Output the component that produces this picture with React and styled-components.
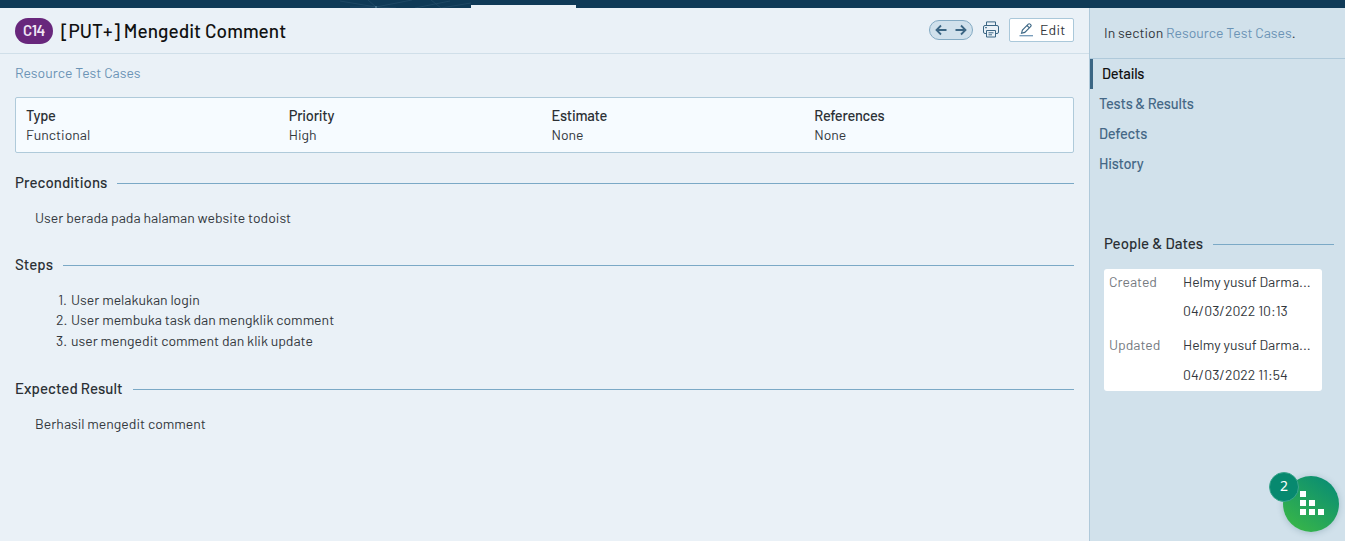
import React from "react";
import styled, { createGlobalStyle } from "styled-components";

const Global = createGlobalStyle`
  * { box-sizing: border-box; }
  html, body { margin: 0; height: 100%; overflow: hidden; }
  body {
    background: #eaf1f7;
    color: #33383d;
    font-family: Barlow, Roboto, "Liberation Sans", sans-serif;
    font-size: 14px;
    line-height: 20px;
  }
`;

const Txt = styled.span`
  letter-spacing: ${(p) => p.$ls || 0}px;
  white-space: nowrap;
`;
const Page = styled.div`
  height: 541px;
  display: flex;
  flex-direction: column;
`;
const TopBar = styled.div`
  height: 8px;
  flex: none;
  display: flex;
  align-items: flex-end;
  background: #0f3a57;
`;
const Pattern = styled.svg`
  width: 131px;
  height: 8px;
  margin-left: 340px;
`;
const ActiveTab = styled.div`
  width: 105px;
  height: 3px;
  background: #eaf1f7;
`;
const Body = styled.div`
  flex: 1;
  display: flex;
`;
const Main = styled.main`
  width: 1089px;
`;
const Header = styled.header`
  height: 46px;
  display: flex;
  align-items: center;
  padding: 0 15px;
  border-bottom: 1px solid #d0dfe9;
`;
const CaseId = styled.div`
  width: 38px;
  height: 26px;
  border-radius: 13px;
  background: #68277c;
  color: #f1e6f5;
  font-size: 15px;
  font-weight: 600;
  text-align: center;
  line-height: 25px;
`;
const Title = styled.h1`
  flex: 1;
  margin: 1px 0 0 8px;
  font-size: 19px;
  line-height: 26px;
  font-weight: 500;
  color: #111;
`;
const NavPill = styled.div`
  display: flex;
  align-items: center;
  justify-content: center;
  width: 44px;
  height: 20px;
  margin: -2px 10px 0 0;
  border: 1px solid #83aac3;
  border-radius: 10px;
  background: #d0e1ec;
`;
const PrintIcon = styled.svg`
  margin: -2px 10px 0 0;
`;
const EditButton = styled.button`
  display: flex;
  align-items: center;
  width: 65px;
  height: 24px;
  margin: -2px 0 0;
  padding: 0 0 0 9px;
  gap: 6px;
  border: 1px solid #aac8da;
  border-radius: 2px;
  background: #fff;
  color: #33383d;
  font: inherit;
`;
const Link = styled.a`
  color: #6b93b5;
`;
const Content = styled.div`
  padding: 9px 15px 0;
`;
const Fields = styled.div`
  display: grid;
  grid-template-columns: repeat(4, 262.75px);
  width: 1059px;
  height: 56px;
  margin-top: 14px;
  padding: 8px 0 0 10px;
  border: 1px solid #afcada;
  border-radius: 2px;
  background: #f6fbff;
  overflow: hidden;
`;
const Field = styled.div`
  display: flex;
  flex-direction: column;
  line-height: 19px;
`;
const Label = styled(Txt)`
  font-size: 14.6px;
  font-weight: 500;
  letter-spacing: -0.25px;
  color: #2b3035;
`;
const SectionHead = styled.h2`
  display: flex;
  align-items: center;
  gap: 10px;
  height: 20px;
  margin: ${(p) => p.$top}px 0 0;
  font-size: 15px;
  line-height: 18px;
  letter-spacing: 0.05px;
  font-weight: 500;
  color: #2b3035;
  & > span {
    letter-spacing: inherit;
    margin-top: -2px;
  }
  &::after {
    content: "";
    flex: 1;
    height: 1px;
    margin-top: 1px;
    background: #7ba9c6;
  }
`;
const Paragraph = styled.p`
  margin: 15px 0 0 20px;
`;
const Steps = styled.ol`
  margin: 15px 0 0 41px;
  padding: 0;
  list-style: none;
  line-height: 20.4px;
`;
const Step = styled.li`
  display: flex;
`;
const StepNo = styled.span`
  width: 11px;
  margin-right: 4px;
  text-align: right;
`;
const Side = styled.aside`
  width: 256px;
  border-left: 1px solid #afc9da;
  background: #d1e1eb;
`;
const SideIntro = styled.div`
  height: 51px;
  padding: 15px 0 0 14px;
  border-bottom: 1px solid #afc9da;
`;
const NavItem = styled.div`
  height: 30px;
  line-height: 29px;
  padding-left: 9px;
  font-size: 14.6px;
  font-weight: 500;
  color: ${(p) => (p.$active ? "#111" : "#456886")};
  border-left: ${(p) => (p.$active ? "3px solid #3b6684" : "0")};
`;
const People = styled.section`
  padding: 0 11px 0 14px;
`;
const PeopleCard = styled.div`
  display: grid;
  grid-template-columns: 74px 1fr;
  grid-template-rows: 29px 34px 30px 29px;
  width: 218px;
  height: 122px;
  margin-top: 15px;
  padding: 3px 5px 0;
  border-radius: 3px;
  background: #fff;
`;
const Muted = styled(Txt)`
  color: #757a7f;
`;
const Value = styled(Txt)`
  grid-column: 2;
`;
const Launcher = styled.div`
  position: absolute;
  left: 1283px;
  top: 476px;
  width: 56px;
  height: 56px;
  border-radius: 50%;
  background: linear-gradient(35deg, #35b34b 15%, #0d9070 85%);
  box-shadow: 0 1px 6px rgba(30, 80, 100, 0.25);
`;
const Count = styled.div`
  position: absolute;
  left: -14px;
  top: -4px;
  width: 30px;
  height: 30px;
  border: 1px solid #3aa58c;
  border-radius: 50%;
  background: #07896f;
  color: #fff;
  font: 14px/26px "Noto Sans", sans-serif;
  text-align: center;
`;
const Blocks = styled.svg`
  position: absolute;
  left: 17px;
  top: 15px;
`;

const fields = [
  ["Type", "Functional"],
  ["Priority", "High"],
  ["Estimate", "None"],
  ["References", "None"],
];
const steps = [
  "User melakukan login",
  "User membuka task dan mengklik comment",
  "user mengedit comment dan klik update",
];

export default function App() {
  return (
    <Page>
      <Global />
      <TopBar>
        <Pattern viewBox="0 0 131 8" fill="none" stroke="#28536e" strokeWidth=".6">
          <path d="M0 1l36 6L72 0M10 7l26 0M36 7l-8-7M36 7l20 1M75 8l35-7M91 0l10 8M131 3l-30 5" />
          <circle cx="36" cy="7" r="1" fill="#4f7b94" stroke="none" />
        </Pattern>
        <ActiveTab />
      </TopBar>
      <Body>
        <Main>
          <Header>
            <CaseId><Txt $ls={-0.4}>C14</Txt></CaseId>
            <Title><Txt $ls={0.05}>[PUT+] Mengedit Comment</Txt></Title>
            <NavPill>
              <svg width="32" height="12" viewBox="0 0 32 12" fill="none" stroke="#3b6684" strokeWidth="1.8">
                <path d="M11.5 6H2M6 1.5L1.500 6 6 10.500M20.500 6H30M26 1.500L30.500 6 26 10.500" />
              </svg>
            </NavPill>
            <PrintIcon width="16" height="17" viewBox="0 0 16 17" fill="none" stroke="#3b6684" strokeWidth="1">
              <path d="M3.500 4.500V.9H12.500V4.500M3.500 12.500H2A1.500 1.500 0 0 1 .5 11V6A1.500 1.500 0 0 1 2 4.500H14A1.500 1.500 0 0 1 15.500 6V11A1.500 1.500 0 0 1 14 12.500H12.500M3.500 9.500H12.500V16H3.500ZM5.500 11.800H10.500M5.500 13.800H9M2 6.700H4" />
            </PrintIcon>
            <EditButton>
              <svg width="15" height="14" viewBox="0 0 15 14" fill="none" stroke="#3b6684" strokeWidth="1.1">
                <path d="M2.500 10.300l.9-3.300L9.300 1.100q.9-.8 1.800 0l.7.7q.7.8 0 1.700L5.800 9.400ZM8 2.500l2.400 2.400" />
                <path d="M.5 12.700H14" stroke="#7298b8" strokeWidth="1.300" />
              </svg>
              <Txt $ls={0.15}>Edit</Txt>
            </EditButton>
          </Header>
          <Content>
            <Link><Txt>Resource Test Cases</Txt></Link>
            <Fields>
              {fields.map(([k, v]) => (
                <Field key={k}><Label>{k}</Label><Txt>{v}</Txt></Field>
              ))}
            </Fields>
            <SectionHead $top={20}><Txt>Preconditions</Txt></SectionHead>
            <Paragraph><Txt>User berada pada halaman website todoist</Txt></Paragraph>
            <SectionHead $top={27}><Txt>Steps</Txt></SectionHead>
            <Steps>
              {steps.map((s, i) => (
                <Step key={s}><StepNo>{i + 1}.</StepNo><Txt>{s}</Txt></Step>
              ))}
            </Steps>
            <SectionHead $top={27.8}><Txt>Expected Result</Txt></SectionHead>
            <Paragraph><Txt>Berhasil mengedit comment</Txt></Paragraph>
          </Content>
        </Main>
        <Side>
          <SideIntro>
            <Txt>In section <Link>Resource Test Cases</Link>.</Txt>
          </SideIntro>
          <NavItem $active><Txt $ls={-0.25}>Details</Txt></NavItem>
          <NavItem><Txt $ls={-0.2}>Tests &amp; Results</Txt></NavItem>
          <NavItem><Txt $ls={-0.2}>Defects</Txt></NavItem>
          <NavItem><Txt $ls={-0.25}>History</Txt></NavItem>
          <People>
            <SectionHead $top={55}><Txt>People &amp; Dates</Txt></SectionHead>
            <PeopleCard>
              <Muted>Created</Muted>
              <Value>Helmy yusuf Darma...</Value>
              <Value>04/03/2022 10:13</Value>
              <Muted>Updated</Muted>
              <Value>Helmy yusuf Darma...</Value>
              <Value>04/03/2022 11:54</Value>
            </PeopleCard>
          </People>
        </Side>
      </Body>
      <Launcher>
        <Blocks width="24" height="24" viewBox="0 0 24 24" fill="#fff">
          <path d="M0 0h6v6H0zM0 9h6v6H0zM9 9h6v6H9zM0 18h6v6H0zM9 18h6v6H9zM18 18h6v6h-6z" />
        </Blocks>
        <Count>2</Count>
      </Launcher>
    </Page>
  );
}
